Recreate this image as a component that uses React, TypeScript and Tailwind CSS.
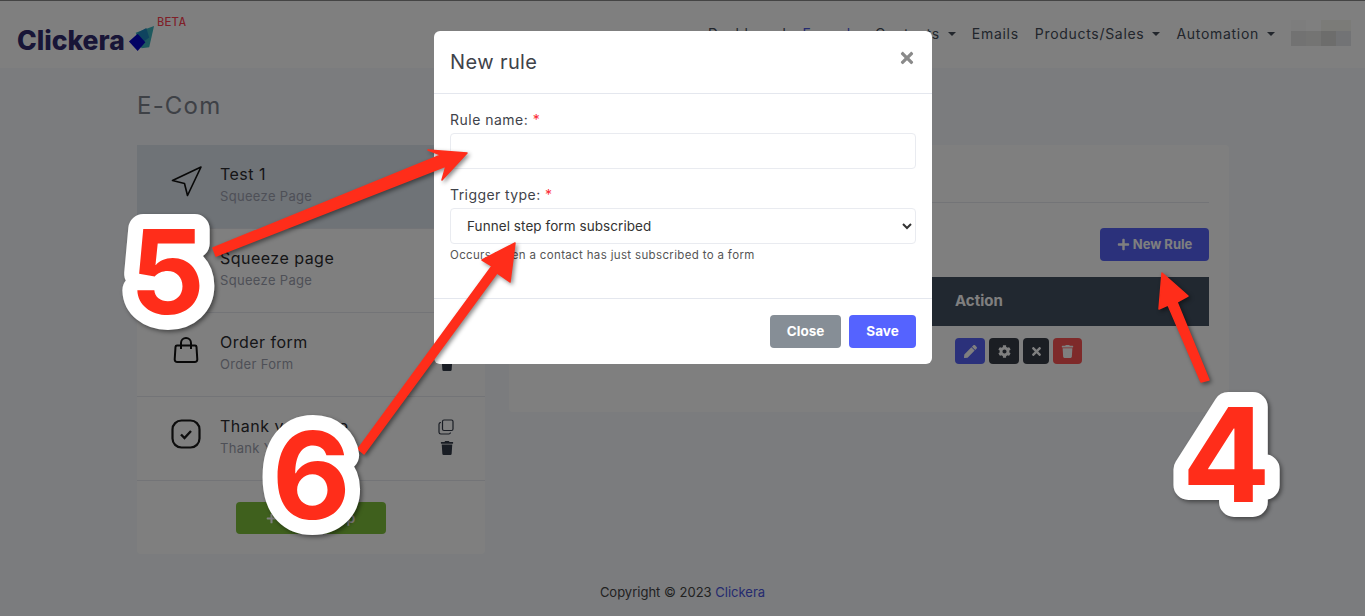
import React from 'react';
import { Navigation } from 'lucide-react';
import { FaPlus, FaPen, FaCog, FaTimes, FaTrash } from 'react-icons/fa';

const STEPS = [
    { name: 'Test 1', type: 'Squeeze Page', icon: 'send', active: true },
    { name: 'Squeeze page', type: 'Squeeze Page', icon: 'send', active: false },
    { name: 'Order form', type: 'Order Form', icon: 'bag', active: false },
    { name: 'Thank you page', type: 'Thank You Page', icon: 'check', active: false }
];

const BagIcon = () => (
    <svg width="28" height="28" viewBox="0 0 28 28" fill="none" stroke="#111" strokeWidth="2" strokeLinejoin="round">
        <path d="M5 9.500h18a1.500 1.500 0 0 1 1.500 1.400l.8 12.600a2.600 2.600 0 0 1-2.600 2.500H5.300a2.600 2.600 0 0 1-2.600-2.500l.8-12.600A1.500 1.500 0 0 1 5 9.500z" />
        <path d="M9 13V7a5 5 0 0 1 10 0v6" />
    </svg>
);

const CheckIcon = () => (
    <svg width="30" height="30" viewBox="0 0 30 30" fill="none" stroke="#1a1a1a" strokeWidth="2.200">
        <rect x="1.500" y="1.500" width="27" height="27" rx="9" />
        <path d="M10 15.500l3.500 3.500 6.500-7" strokeWidth="2.400" />
    </svg>
);

const CopyIcon = () => (
    <svg width="16" height="16" viewBox="0 0 16 16" fill="none" stroke="#333a48" strokeWidth="1.200">
        <rect x="4.500" y="1" width="10.500" height="10.500" rx="1.500" />
        <path d="M3 3.500h-.2A1.800 1.800 0 0 0 1 5.300v8A1.800 1.800 0 0 0 2.800 15h8a1.800 1.800 0 0 0 1.700-1.500" />
    </svg>
);

const StepIcon = ({ icon }: { icon: string }) => {
    if (icon === 'bag') return <BagIcon />;
    if (icon === 'check') return <CheckIcon />;
    return <Navigation size={36} strokeWidth={1.1} color="#111" />;
};

// red annotation arrows and numbers painted on top of the screenshot
const Annotations = () => (
    <svg className="absolute inset-0 z-20 drop-shadow-[2px_2px_2px_rgba(0,0,0,0.45)]" width="1365" height="616" viewBox="0 0 1365 616">
        <g fill="#ff2d1a" stroke="#ff2d1a" strokeWidth="1.500" strokeLinejoin="round">
            <polygon points="213,248 216,256 446,166 442,180 467,153 428,150 441,155" />
            <polygon points="358,449 364,454 497,273 510,282 515,243 482,260 492,266" />
            <polygon points="1201,382 1209,380 1177,302 1188,296 1162,273 1159,309 1168,305" />
        </g>
        {/* plug the tiny gaps the wide outline leaves inside the digits */}
        <circle cx="168" cy="285" r="6" fill="#ffffff" />
        <circle cx="312" cy="491" r="6" fill="#ffffff" />
        <g fontFamily="Inter, sans-serif" fontWeight="700" fill="#ff2d1a" stroke="#ffffff" strokeWidth="30" strokeLinejoin="round" paintOrder="stroke" fontSize="117">
            <text x="130" y="314">5</text>
            <text x="272" y="519" fontSize="121">6</text>
            <text x="1182" y="502" fontSize="131">4</text>
        </g>
    </svg>
);

const NewRuleModal = () => (
    <div className="absolute left-[434px] top-[31px] z-10 w-[498px] rounded-md bg-white text-[#3f434a]">
        <div className="flex h-[63px] items-center justify-between border-b border-[#e4e7ee] px-4">
            <h5 className="text-xl tracking-[0.02em]">New rule</h5>
            <FaTimes className="mb-[9px] text-[18px] text-[#8a8a8a]" />
        </div>
        <div className="h-[205px] border-b border-[#e4e7ee] px-4 pt-[15px]">
            <label className="mb-[3px] block text-sm leading-[21px] tracking-[0.035em]">
                Rule name: <span className="text-red-500">*</span>
            </label>
            <input className="block h-9 w-full rounded border border-[#e9ebf0] bg-white" />
            <label className="mb-[3px] mt-[15px] block text-sm leading-[21px] tracking-[0.03em]">
                Trigger type: <span className="text-red-500">*</span>
            </label>
            <select className="block h-9 w-full rounded border border-[#e9ebf0] bg-white pl-3 pr-2 text-[13.500px] tracking-[0.005em] text-[#333]">
                <option>Funnel step form subscribed</option>
            </select>
            <p className="mt-[3px] text-[11.500px] leading-[16px] tracking-[0.03em] text-[#555]">
                Occurs when a contact has just subscribed to a form
            </p>
        </div>
        <div className="flex h-[65px] items-center justify-end gap-2 px-4">
            <button className="h-[33px] w-[71px] rounded bg-[#868e96] text-[13.500px] font-bold text-white">Close</button>
            <button className="h-[33px] w-[67px] rounded bg-[#5563ff] text-[13.500px] font-bold text-white">Save</button>
        </div>
    </div>
);

const App = () => {
    return (
        <div className="relative h-[616px] overflow-hidden bg-[#f6f8fc] font-['Inter',sans-serif] text-[#333]">
            <div className="h-[1px] bg-[#888]"></div>

            {/* Navbar */}
            <nav className="flex h-[67px] items-center justify-between bg-white pl-[17px] pr-[14px]">
                <div className="relative flex items-center">
                    <span className="mt-[11px] text-[26.500px] font-extrabold leading-none text-[#302a6e]">Clickera</span>
                    <svg className="ml-[3px] mt-[8px]" width="27" height="27" viewBox="0 0 28 28">
                        <polygon points="8,8 27,1 22,23 14,24" fill="#3cb3bd" />
                        <polygon points="10,8 19,3 22,13 14,19" fill="#1f89bf" />
                        <polygon points="1,17 10,9 18,18 10,27" fill="#0505c8" />
                    </svg>
                    <span className="absolute left-[140px] top-0 font-['DejaVu_Sans_Mono',monospace] text-[12px] leading-none text-[#ff4050]">BETA</span>
                </div>
                <div className="mb-[2px] flex items-center text-sm tracking-[0.05em] text-[#444c58]">
                    <a className="px-2">Dashboard</a>
                    <a className="px-2 text-[#4a56e0]">Funnels</a>
                    <a className="flex items-center px-2">Contacts <span className="ml-2 border-x-[4.500px] border-t-[4.500px] border-x-transparent border-t-[#444c58]"></span></a>
                    <a className="px-2">Emails</a>
                    <a className="flex items-center px-2">Products/Sales <span className="ml-2 border-x-[4.500px] border-t-[4.500px] border-x-transparent border-t-[#444c58]"></span></a>
                    <a className="flex items-center px-2">Automation <span className="ml-2 border-x-[4.500px] border-t-[4.500px] border-x-transparent border-t-[#444c58]"></span></a>
                    {/* pixelated avatar */}
                    <div className="mb-[2px] ml-2 grid w-[60px] grid-cols-4">
                        <div className="h-[11px] bg-[#fbfbfb]"></div>
                        <div className="h-[11px] bg-[#ffffff]"></div>
                        <div className="h-[11px] bg-[#f6f6f0]"></div>
                        <div className="h-[11px] bg-[#f6f6f0]"></div>
                        <div className="h-[15px] bg-[#e4e4e4]"></div>
                        <div className="h-[15px] bg-[#e8e8e6]"></div>
                        <div className="h-[15px] bg-[#dadad8]"></div>
                        <div className="h-[15px] bg-[#e4e6ea]"></div>
                    </div>
                </div>
            </nav>

            {/* Main Content */}
            <main className="ml-[137px] w-[1092px]">
                <h1 className="pb-[23px] pt-[22px] text-2xl tracking-[0.05em] text-[#7d828c]">E-Com</h1>

                <div className="flex items-start gap-6">
                    {/* Funnel steps */}
                    <div className="w-[348px] rounded bg-white">
                        {STEPS.map((step) => (
                            <div key={step.name} className={`flex h-[84px] items-center border-b border-[#e6e8ee] ${step.active ? 'bg-[#dee6ee]' : ''}`}>
                                <div className="flex w-[83px] justify-center pb-[9px] pl-[15px]">
                                    <StepIcon icon={step.icon} />
                                </div>
                                <div className="flex-1 pb-[5px]">
                                    <div className="text-base leading-6 tracking-[0.03em] text-[#2c2c30]">{step.name}</div>
                                    <div className="mt-[1px] text-[13px] leading-[19px] tracking-[0.025em] text-[#9ca0ae]">{step.type}</div>
                                </div>
                                <div className="flex w-[47px] flex-col gap-[6px] pb-[4px]">
                                    <CopyIcon />
                                    <FaTrash className="ml-[2px] text-[14px] text-[#333a48]" />
                                </div>
                            </div>
                        ))}
                        <div className="flex h-[73px] justify-center pt-[21px]">
                            <button className="flex h-8 w-[150px] items-center justify-center gap-[6px] rounded bg-[#7ec13a] text-sm font-semibold tracking-[0.08em] text-white">
                                <FaPlus className="text-[11px]" /> New Step
                            </button>
                        </div>
                    </div>

                    {/* Rules card */}
                    <div className="h-[267px] w-[720px] rounded bg-white px-5">
                        <div className="h-[58px] border-b border-[#e6e8ee]"></div>
                        <div className="mt-[25px] flex justify-end">
                            <button className="flex h-[33px] w-[109px] items-center justify-center gap-[3px] rounded bg-[#5662f6] text-[13px] font-bold text-white">
                                <FaPlus className="text-[13px]" /> New Rule
                            </button>
                        </div>
                        <div className="mt-4 grid h-[49px] grid-cols-[426px_1fr] items-center bg-[#425060] text-[15px] font-bold text-white">
                            <div></div>
                            <div>Action</div>
                        </div>
                        <div className="mt-3 flex gap-1 pl-[426px] text-[13px] text-white">
                            <div className="flex h-[26px] w-[30px] items-center justify-center rounded-sm bg-[#5662f6]"><FaPen /></div>
                            <div className="flex h-[26px] w-[30px] items-center justify-center rounded-sm bg-[#363c46]"><FaCog /></div>
                            <div className="flex h-[26px] w-[26px] items-center justify-center rounded-sm bg-[#363c46]"><FaTimes /></div>
                            <div className="flex h-[26px] w-[29px] items-center justify-center rounded-sm bg-[#fc5454]"><FaTrash /></div>
                        </div>
                    </div>
                </div>
            </main>

            <footer className="mt-7 text-center text-[13px] leading-5 text-[#444]">
                Copyright © 2023 <span className="text-[#4a56e0]">Clickera</span>
            </footer>

            {/* Backdrop + modal */}
            <div className="absolute inset-0 bg-black/50"></div>
            <NewRuleModal />
            <Annotations />
        </div>
    );
};

export default App;
